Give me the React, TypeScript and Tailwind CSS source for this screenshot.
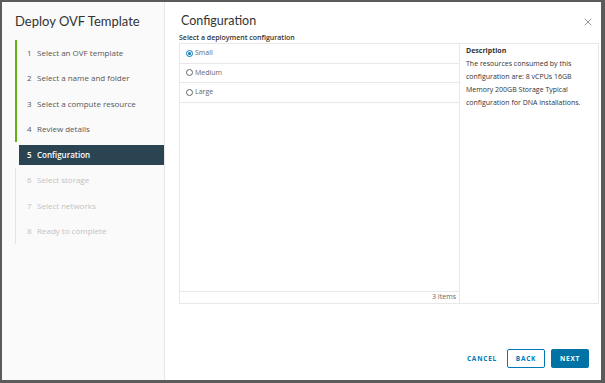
import { X } from "lucide-react";

type Step = { n: number; label: string; state: "done" | "active" | "todo" };

const steps: Step[] = [
  { n: 1, label: "Select an OVF template", state: "done" },
  { n: 2, label: "Select a name and folder", state: "done" },
  { n: 3, label: "Select a compute resource", state: "done" },
  { n: 4, label: "Review details", state: "done" },
  { n: 5, label: "Configuration", state: "active" },
  { n: 6, label: "Select storage", state: "todo" },
  { n: 7, label: "Select networks", state: "todo" },
  { n: 8, label: "Ready to complete", state: "todo" },
];

const configs = ["Small", "Medium", "Large"];

const StepRow = ({ step }: { step: Step }) => {
  if (step.state === "active") {
    return (
      <div className="h-[25.5px] flex items-center border-l-2 border-transparent">
        <div className="ml-[2px] h-[20px] flex-1 bg-[#2b4452] flex items-center pl-[8px] text-white font-semibold">
          <span className="w-[10px]">{step.n}</span>
          <span>{step.label}</span>
        </div>
      </div>
    );
  }
  const done = step.state === "done";
  return (
    <div
      className={
        done
          ? "h-[25.5px] flex items-center border-l-2 border-[#60b515] pl-[10px] text-[#565656]"
          : "h-[25.5px] flex items-center border-l border-[#e4e4e4] pl-[11px] text-[#c2c2c2]"
      }
    >
      <span className="w-[10px]">{step.n}</span>
      <span>{step.label}</span>
    </div>
  );
};

export default function App() {
  return (
    <div
      className="w-[605px] h-[383px] bg-[#5b5b5b] pt-[2px] pl-[2px] pr-[4px] pb-[3px] overflow-hidden"
      style={{ fontFamily: '"Open Sans", "Liberation Sans", sans-serif' }}
    >
      <div className="w-full h-full bg-white flex">
        {/* Sidebar */}
        <div className="w-[163px] bg-[#fafafa] border-r border-[#e6e6e6] flex flex-col">
          <h1 className="pl-[13px] pt-[10px] text-[13px] leading-[18px] text-[#333] h-[38px] whitespace-nowrap font-['Lato',sans-serif]">
            Deploy OVF Template
          </h1>
          <div className="ml-[13px] text-[8px]">
            {steps.map((s) => (
              <StepRow key={s.n} step={s} />
            ))}
          </div>
        </div>

        {/* Main */}
        <div className="flex-1 flex flex-col pl-[14px] pr-[2px]">
          <div className="flex items-center justify-between h-[30px] pt-[9px]">
            <h2 className="ml-[2px] text-[12.5px] text-[#333] font-['Lato',sans-serif]">Configuration</h2>
            <X className="w-[12px] h-[12px] mr-[5px] mt-[1px] text-[#666]" strokeWidth={1.4} />
          </div>
          <p className="text-[7px] font-semibold text-[#333] h-[11px] leading-[11px]">
            Select a deployment configuration
          </p>
          <div className="flex h-[261px] border border-[#e8e8e8]">
            <div className="w-[280px] flex flex-col border-r border-[#e8e8e8]">
              <div className="flex-1">
                {configs.map((c, i) => (
                  <div
                    key={c}
                    className="h-[19.5px] flex items-center pl-[6px] border-b border-[#e8e8e8] text-[7px] text-[#666]"
                  >
                    <span
                      className={
                        i === 0
                          ? "w-[7px] h-[7px] rounded-full border border-[#0079b8] flex items-center justify-center mr-[2px]"
                          : "w-[7px] h-[7px] rounded-full border border-[#666] mr-[2px]"
                      }
                    >
                      {i === 0 && <span className="w-[3px] h-[3px] rounded-full bg-[#0079b8]" />}
                    </span>
                    {c}
                  </div>
                ))}
              </div>
              <div className="h-[12px] border-t border-[#e8e8e8] flex items-center justify-end pr-[3px] text-[7px] text-[#666]">
                3 Items
              </div>
            </div>
            <div className="flex-1 px-[6px] text-[7px] leading-[13px] text-[#333]">
              <p className="font-bold">Description</p>
              <p>
                The resources consumed by this configuration are: 8 vCPUs 16GB Memory 200GB Storage
                Typical configuration for DNA installations.
              </p>
            </div>
          </div>
          <div className="flex-1 flex items-end justify-end pb-[12px] pr-[10px] gap-[6px]">
            <button className="h-[19px] mr-[4px] text-[6.5px] font-bold tracking-[0.12em] text-[#0079b8]">
              CANCEL
            </button>
            <button className="h-[19px] w-[38px] border border-[#0079b8] rounded-[2px] text-[6.5px] font-bold tracking-[0.12em] text-[#0079b8]">
              BACK
            </button>
            <button className="h-[19px] w-[38px] bg-[#0072a3] rounded-[2px] text-[6.5px] font-bold tracking-[0.12em] text-white">
              NEXT
            </button>
          </div>
        </div>
      </div>
    </div>
  );
}
